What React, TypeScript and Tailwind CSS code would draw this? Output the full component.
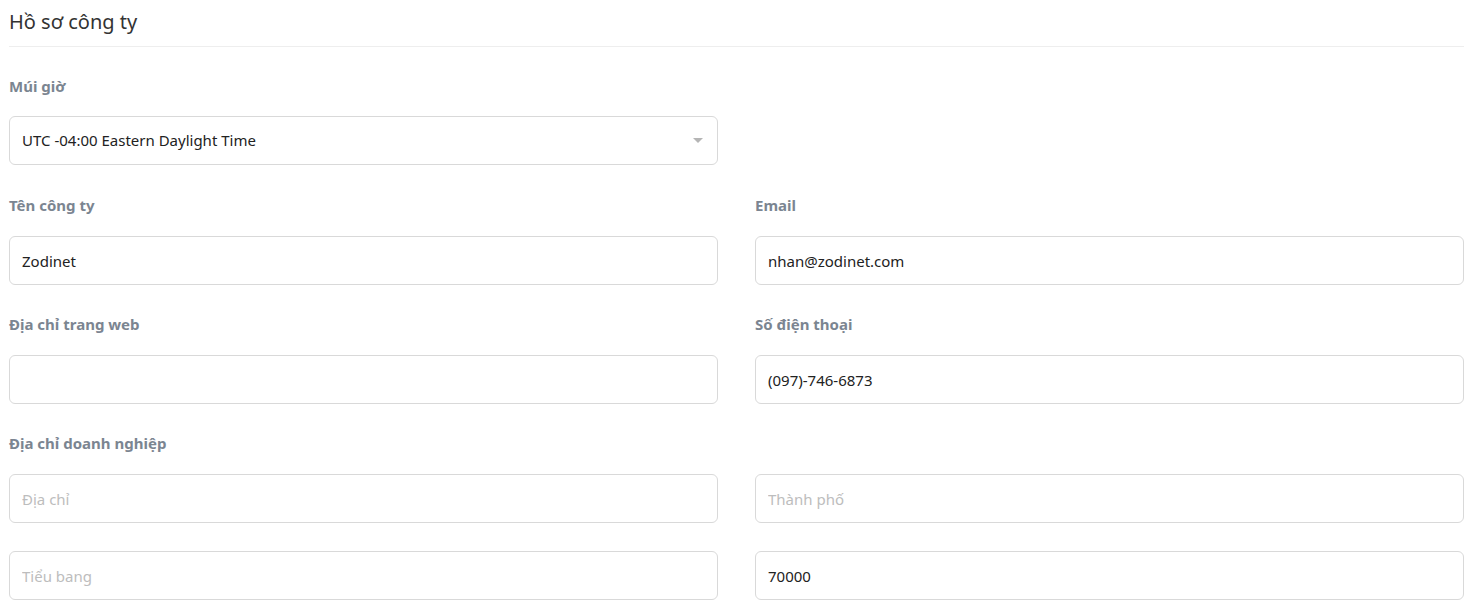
const font = { fontFamily: '"Segoe UI", "Noto Sans", sans-serif' };

function Field({ label, value, placeholder }: { label?: string; value?: string; placeholder?: string }) {
  return (
    <div className="flex flex-col">
      {label !== undefined && (
        <label className="h-[20px] mb-[21px] text-[15px] leading-[20px] font-bold text-[#7b8591]">{label}</label>
      )}
      <input
        readOnly
        defaultValue={value}
        placeholder={placeholder}
        className="h-[49px] w-full rounded-[6px] border border-[#d9d9d9] bg-white px-[12px] text-[15px] text-[#222] placeholder:text-[#bdbdbd] outline-none"
      />
    </div>
  );
}

export default function App() {
  return (
    <div className="min-h-screen bg-white pl-[9px] pr-[11px]" style={font}>
      <div className="pt-[8px] pb-[10px] border-b border-[#eeeeee]">
        <h1 className="text-[20px] leading-[28px] font-normal text-[#333]">Hồ sơ công ty</h1>
      </div>

      <div className="mt-[29px] grid grid-cols-2 gap-x-[37px]">
        <div className="flex flex-col">
          <label className="h-[20px] mb-[20px] text-[15px] leading-[20px] font-bold text-[#7b8591]">Múi giờ</label>
          <div className="relative h-[49px] rounded-[6px] border border-[#d9d9d9] bg-white flex items-center px-[12px] text-[15px] text-[#222]">
            UTC -04:00 Eastern Daylight Time
            <span className="absolute right-[14px] top-[21px] w-0 h-0 border-l-[5px] border-r-[5px] border-t-[5px] border-l-transparent border-r-transparent border-t-[#b5b5b5]" />
          </div>
        </div>
        <div />
      </div>

      <div className="mt-[30px] grid grid-cols-2 gap-x-[37px] gap-y-[29px]">
        <Field label="Tên công ty" value="Zodinet" />
        <Field label="Email" value="nhan@zodinet.com" />
        <Field label="Địa chỉ trang web" value="" />
        <Field label="Số điện thoại" value="(097)-746-6873" />
      </div>

      <div className="mt-[29px]">
        <label className="block h-[20px] mb-[21px] text-[15px] leading-[20px] font-bold text-[#7b8591]">Địa chỉ doanh nghiệp</label>
        <div className="grid grid-cols-2 gap-x-[37px] gap-y-[28px]">
          <Field placeholder="Địa chỉ" />
          <Field placeholder="Thành phố" />
          <Field placeholder="Tiểu bang" />
          <Field value="70000" />
        </div>
      </div>
    </div>
  );
}
